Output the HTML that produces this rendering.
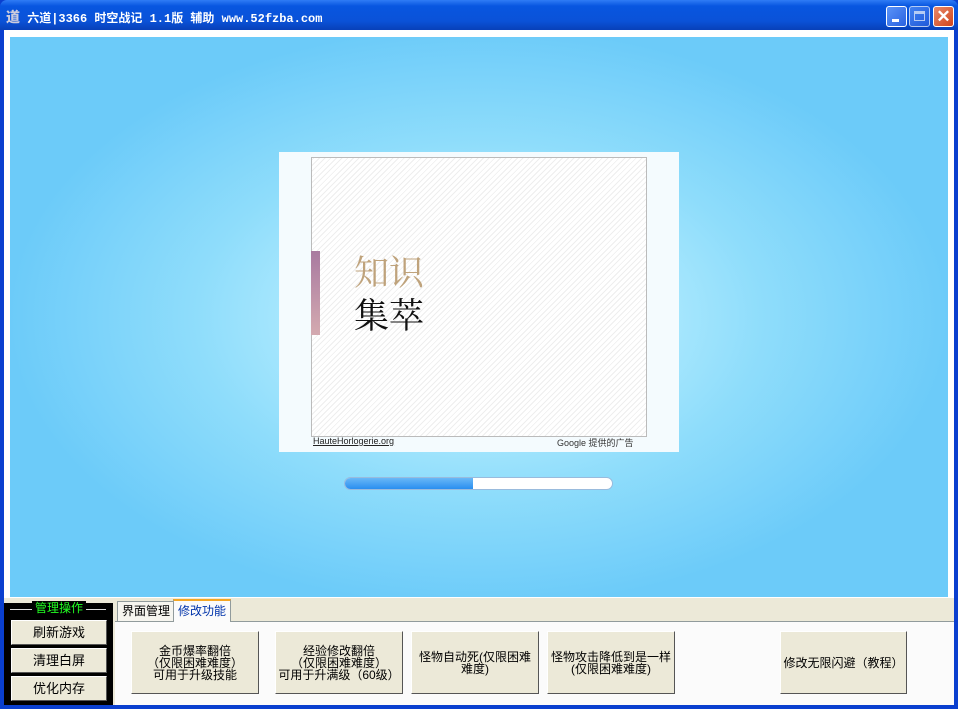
<!DOCTYPE html>
<html><head><meta charset="utf-8"><style>
*{margin:0;padding:0;box-sizing:border-box}
body{width:958px;height:709px;overflow:hidden;background:#0a3fcf;font-family:"Liberation Sans","Noto Sans CJK SC",sans-serif;position:relative}
.title{position:absolute;left:0;top:0;width:958px;height:30px;background:linear-gradient(#2f7cf5,#0856e0 20%,#0a52d8 70%,#0840b8);border-radius:7px 7px 0 0}
.title span{position:absolute;left:6px;top:7px;color:#fff;font:bold 12px "Liberation Mono","Noto Sans CJK SC",monospace;letter-spacing:0px}
.tb{position:absolute;top:6px;width:21px;height:21px;border:1px solid #fff;border-radius:3px;background:linear-gradient(135deg,#5a93f8,#2a62e0)}
.client{position:absolute;left:4px;top:30px;width:950px;height:675px;background:#fff}
.blue{position:absolute;left:10px;top:37px;width:938px;height:560px;background:radial-gradient(ellipse 470px 290px at 50% 50%,#dff7ff 0%,#b4ecff 30%,#8fddfb 60%,#6ccbf9 100%)}
.ad{position:absolute;left:279px;top:152px;width:400px;height:300px;background:#f4fbfe}
.adin{position:absolute;left:311px;top:157px;width:336px;height:280px;border:1px solid #bbb;background:repeating-linear-gradient(-45deg,#fff 0 3px,#eee 3px 4px)}
.bar{position:absolute;left:344px;top:477px;width:269px;height:13px;border-radius:7px;background:#fff;border:1px solid #9bd;overflow:hidden}
.bar div{width:128px;height:100%;background:linear-gradient(#69b8f7,#2a8ef0)}
.bottom{position:absolute;left:4px;top:598px;width:950px;height:107px;background:#ece9d8}
.blk{position:absolute;left:4px;top:603px;width:109px;height:102px;background:#000}
.lb{position:absolute;left:11px;width:96px;height:25px;background:#ece9d8;border:1px solid;border-color:#fff #555 #555 #fff;font-size:13px;text-align:center;line-height:23px}
.panel{position:absolute;left:115px;top:621px;width:839px;height:84px;background:#fbfbfb;border-top:1px solid #919b9c}
.btn{position:absolute;top:631px;height:63px;background:#ece9d8;border:1px solid;border-color:#fff #555 #555 #fff;font-size:12px;line-height:12px;text-align:center;display:flex;align-items:center;justify-content:center}
.tab{position:absolute;top:601px;height:20px;font-size:12px;line-height:18px;padding:0 4px;border:1px solid #919b9c;border-bottom:none;background:#f6f5ef}
</style></head><body>
<div class="title"><span><b style="color:#ccd;font-size:14px">道</b> 六道|3366 时空战记 1.1版 辅助 www.52fzba.com</span>
<div class="tb" style="left:886px"><div style="position:absolute;left:5px;top:12px;width:7px;height:3px;background:#fff"></div></div>
<div class="tb" style="left:909px;opacity:.7"><div style="position:absolute;left:4px;top:4px;width:11px;height:10px;border:1px solid #fff;border-top-width:3px"></div></div>
<div class="tb" style="left:933px;background:linear-gradient(135deg,#e8896a,#d0451c);color:#fff;font:bold 17px 'Liberation Sans';text-align:center;line-height:19px">✕</div>
</div>
<div class="client"></div>
<div class="blue"></div>
<div class="ad"></div>
<div class="adin"></div>
<div style="position:absolute;left:311px;top:251px;width:9px;height:84px;background:linear-gradient(#a87aa0,#d4aab0)"></div>
<div style="position:absolute;left:354px;top:251px;font:35px 'Noto Serif CJK SC',serif;color:#bfa37c;line-height:40px">知识</div>
<div style="position:absolute;left:354px;top:294px;font:35px 'Noto Serif CJK SC',serif;color:#111;line-height:40px">集萃</div>
<div style="position:absolute;left:313px;top:436px;font-size:9px;text-decoration:underline;color:#222">HauteHorlogerie.org</div>
<div style="position:absolute;left:557px;top:436px;font-size:9px;color:#333">Google 提供的广告</div>
<div class="bar"><div></div></div>
<div class="bottom"></div>
<div class="blk"></div>
<div style="position:absolute;left:10px;top:609px;width:96px;height:1px;background:#ddd"></div>
<div style="position:absolute;left:32px;top:601px;padding:0 3px;background:#000;color:#2f2;font-size:12px;line-height:14px">管理操作</div>
<div class="lb" style="top:620px">刷新游戏</div>
<div class="lb" style="top:648px">清理白屏</div>
<div class="lb" style="top:676px">优化内存</div>
<div class="panel"></div>
<div class="tab" style="left:117px">界面管理</div>
<div class="tab" style="left:173px;top:599px;height:23px;background:#fbfbfb;color:#0033aa;border-top:2px solid #f5a623;padding-top:1px">修改功能</div>
<div class="btn" style="left:131px;width:128px">金币爆率翻倍<br>（仅限困难难度）<br>可用于升级技能</div>
<div class="btn" style="left:275px;width:128px">经验修改翻倍<br>（仅限困难难度）<br>可用于升满级（60级）</div>
<div class="btn" style="left:411px;width:128px">怪物自动死(仅限困难<br>难度)</div>
<div class="btn" style="left:547px;width:128px">怪物攻击降低到是一样<br>(仅限困难难度)</div>
<div class="btn" style="left:780px;width:127px">修改无限闪避（教程）</div>
</body></html>
